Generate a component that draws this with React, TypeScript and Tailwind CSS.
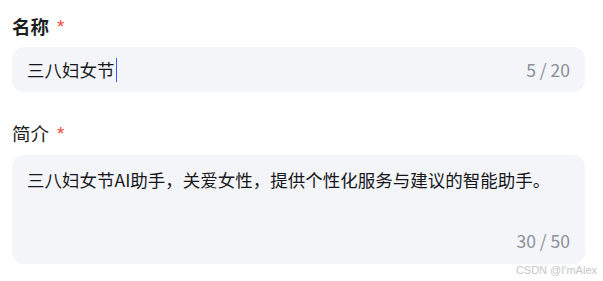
const font = "font-['Noto_Sans_CJK_SC','Noto_Sans',sans-serif]";

function Label({ text, bold }: { text: string; bold?: boolean }) {
  return (
    <div className="flex items-start h-[24px]">
      <span className={`text-[18.5px] leading-[24px] text-[#1d1e22] ${bold ? 'font-bold' : 'font-normal'}`}>
        {text}
      </span>
      <span className="ml-[8px] mt-[2px] text-[19px] leading-[22px] text-[#f5453b] font-['Liberation_Sans',sans-serif]">*</span>
    </div>
  );
}

export default function App() {
  return (
    <div className={`relative w-[603px] h-[281px] bg-white ${font}`}>
      <div className="flex flex-col pt-[14px] pl-[12px] pr-[18px]">
        <Label text="名称" bold />
        <div className="mt-[9px] flex items-center h-[45px] rounded-[12px] bg-[#f4f5f9] pl-[15px] pr-[15px]">
          <span className="text-[17.5px] leading-[22px] text-[#16171a]">三八妇女节</span>
          <span className="ml-[1px] w-[1px] h-[24px] bg-[#3b5bf0]" />
          <span className="ml-auto text-[17.5px] leading-[22px] text-[#8c8f97]">5 / 20</span>
        </div>

        <div className="mt-[29px]">
          <Label text="简介" />
        </div>
        <div className="mt-[10px] flex flex-col h-[109px] rounded-[12px] bg-[#f4f5f9] pl-[15px] pr-[15px] pt-[13px] pb-[12px]">
          <p className="text-[17.5px] leading-[24px] text-[#16171a]">
            三八妇女节AI助手，关爱女性，提供个性化服务与建议的智能助手。
          </p>
          <span className="mt-auto self-end text-[17.5px] leading-[22px] text-[#8c8f97]">30 / 50</span>
        </div>
      </div>
      <div className="absolute right-[6px] bottom-[4px] text-[11px] leading-[14px] text-[#c4c6ca] font-['Liberation_Sans',sans-serif]">
        CSDN @I'mAlex
      </div>
    </div>
  );
}
